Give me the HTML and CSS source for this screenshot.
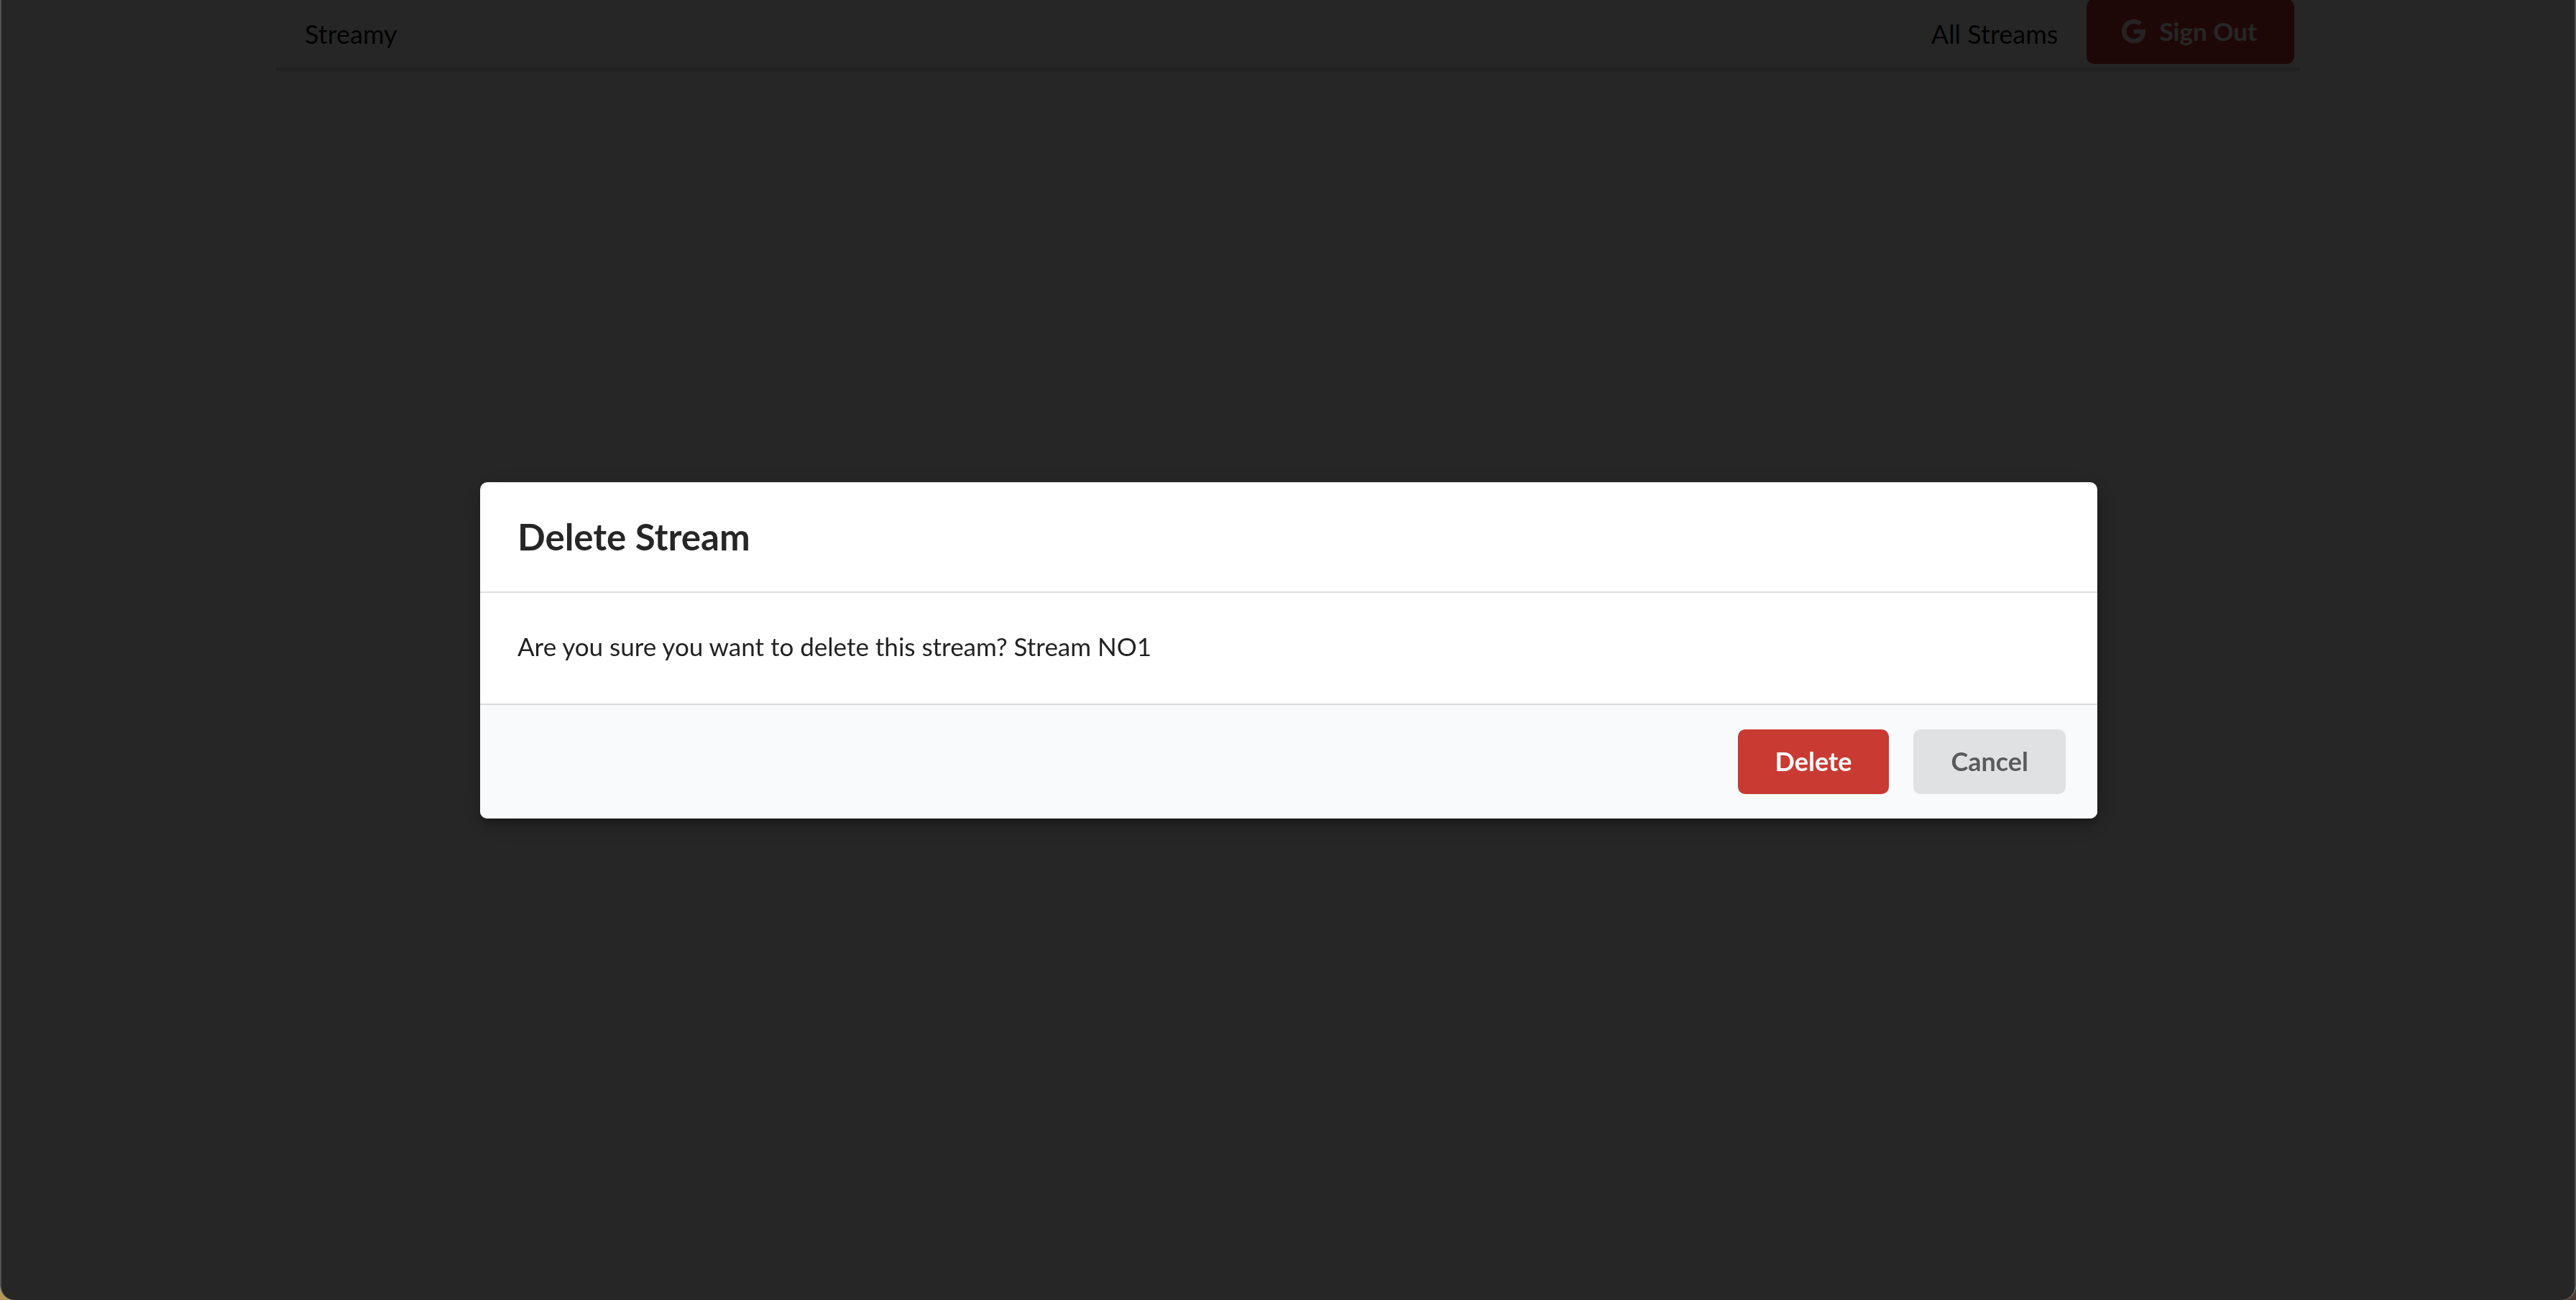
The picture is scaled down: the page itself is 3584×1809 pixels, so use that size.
FILE: index.html
```html
<!DOCTYPE html>
<html lang="en">
<head>
<meta charset="utf-8">
<meta name="viewport" content="width=device-width, initial-scale=1">
<title>Streamy</title>
<link rel="stylesheet" href="styles.css">
</head>
<body>
<div class="page">
  <header class="container">
    <nav class="menu">
      <a class="item" href="#">Streamy</a>
      <div class="menu-right">
        <a class="item" href="#">All Streams</a>
        <button class="button red google" type="button">
          <svg class="icon" viewBox="0 0 488 512" aria-hidden="true"><path d="M488 261.8C488 403.3 391.1 504 248 504 110.8 504 0 393.2 0 256S110.8 8 248 8c66.8 0 123 24.5 166.3 64.9l-67.5 64.9C258.5 52.6 94.3 116.6 94.3 256c0 86.5 69.1 156.6 153.7 156.6 98.2 0 135-70.4 140.8-106.9H248v-85.3h236.1c2.3 12.7 3.9 24.9 3.9 41.4z"/></svg>
          Sign Out
        </button>
      </div>
    </nav>
  </header>
</div>
<div class="dimmer">
  <section class="modal" role="dialog" aria-modal="true" aria-labelledby="modal-title">
    <h1 class="modal-header" id="modal-title">Delete Stream</h1>
    <p class="modal-content">Are you sure you want to delete this stream? Stream NO1</p>
    <div class="modal-actions">
      <button class="button red" type="button">Delete</button>
      <a class="button" href="#">Cancel</a>
    </div>
  </section>
</div>
</body>
</html>
```
FILE: styles.css
```css
* {
  box-sizing: border-box;
}

html {
  background: linear-gradient(90deg, #b39a54 50%, #4a3c34 50%);
}

body {
  margin: 0;
  font-family: Lato, "Liberation Sans", sans-serif;
  font-size: 36px;
  line-height: 50px;
  color: rgba(0, 0, 0, 0.87);
}

.page {
  min-height: 100vh;
  overflow: hidden;
  background: #fff;
  border-radius: 0 0 20px 20px;
}

.container {
  max-width: 2816px;
  margin: -1px auto 0;
}

.menu {
  display: flex;
  align-items: center;
  justify-content: space-between;
  padding-bottom: 5px;
  border-bottom: 5px solid rgba(34, 36, 38, 0.15);
}

.menu-right {
  display: flex;
  align-items: center;
  padding-right: 8px;
}

.item {
  padding: 6px 40px 0;
  color: rgba(0, 0, 0, 0.95);
  text-decoration: none;
}

.button {
  display: inline-flex;
  align-items: center;
  min-height: 90px;
  padding: 0 52px 2px;
  border: 0;
  border-radius: 10px;
  background: #e0e1e2;
  color: rgba(0, 0, 0, 0.6);
  font: inherit;
  font-weight: 700;
  text-decoration: none;
  cursor: pointer;
}

.button.red {
  background: #c93a32;
  color: #fff;
}

.google {
  gap: 19px;
  padding-left: 49px;
  font-size: 35px;
}

.icon {
  width: 33px;
  height: 35px;
  fill: currentColor;
  opacity: 0.9;
}

.dimmer {
  position: fixed;
  inset: 0;
  display: flex;
  align-items: center;
  justify-content: center;
  padding-left: 2px;
  background: rgba(0, 0, 0, 0.85);
  border: solid #525252;
  border-width: 0 2px;
  border-radius: 0 0 20px 20px;
}

.modal {
  width: 90%;
  max-width: 2250px;
  overflow: hidden;
  border-radius: 10px;
  background: #fff;
  box-shadow: 2px 8px 10px 0 rgba(0, 0, 0, 0.2), 2px 8px 38px 5px rgba(0, 0, 0, 0.2);
}

.modal-header {
  margin: 0;
  padding: 44px 52px;
  border-bottom: 2px solid rgba(34, 36, 38, 0.15);
  color: rgba(0, 0, 0, 0.85);
  font-size: 51px;
  line-height: 64px;
}

.modal-content {
  margin: 0;
  padding: 49px 52px 55px;
  font-size: 35px;
}

.modal-actions {
  display: flex;
  justify-content: flex-end;
  gap: 34px;
  padding: 34px 44px;
  border-top: 2px solid rgba(34, 36, 38, 0.15);
  background: #f9fafb;
}
```
